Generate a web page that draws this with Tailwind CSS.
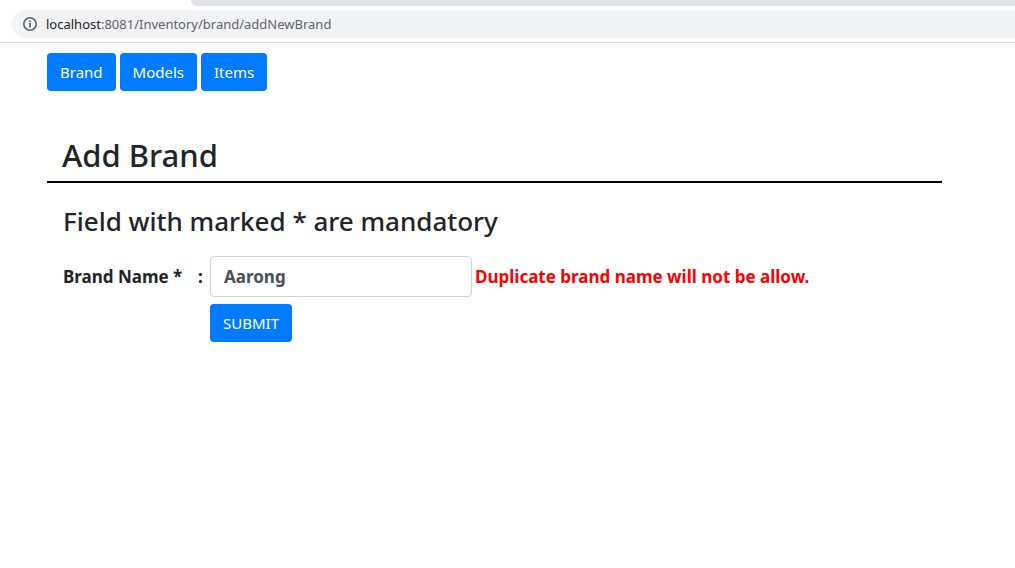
<!DOCTYPE html>
<html lang="en">
<head>
<meta charset="utf-8">
<meta name="viewport" content="width=device-width, initial-scale=1">
<title>Add Brand</title>
<script src="https://cdn.jsdelivr.net/npm/@tailwindcss/browser@4"></script>
</head>
<body class="bg-white font-['Noto_Sans',sans-serif] text-[#212529]">
  <header class="border-b border-[#dadada]">
    <div class="ml-[191px] h-[6px] rounded-bl-lg bg-[#dee1e6]"></div>
    <div class="py-1 pl-3">
      <div class="flex h-7 items-center gap-[9px] rounded-l-full bg-[#f1f3f4] pl-[11px]">
        <svg class="size-[14px] shrink-0" viewBox="0 0 14 14" fill="none" stroke="#5f6368" aria-hidden="true">
          <circle cx="7" cy="7" r="6.2" stroke-width="1.6"/>
          <path d="M7 6V10.5M7 3.4V5" stroke-width="1.8"/>
        </svg>
        <span class="text-[13px] leading-5 text-[#5f6368]"><span class="text-[#202124]">localhost</span>:8081/Inventory/brand/addNewBrand</span>
      </div>
    </div>
  </header>
  <main class="mr-[73px] ml-[47px] pt-[10px]">
    <nav class="flex gap-1">
      <button type="button" class="h-[38px] rounded bg-[#007bff] px-[13px] text-[15px] leading-6 text-white">Brand</button>
      <button type="button" class="h-[38px] rounded bg-[#007bff] px-[13px] text-[15px] leading-6 text-white">Models</button>
      <button type="button" class="h-[38px] rounded bg-[#007bff] px-[13px] text-[15px] leading-6 text-white">Items</button>
    </nav>
    <h1 class="mt-[46px] border-b-2 border-black px-[15px] pb-2 text-[31px] leading-9 font-medium">Add Brand</h1>
    <form class="px-4" onsubmit="return false">
      <h2 class="mt-5 text-[26px] leading-9 font-medium">Field with marked * are mandatory</h2>
      <div class="mt-[17px] grid grid-cols-[135px_12px_262px_1fr] items-center gap-y-[7px] text-[17px] leading-6 font-bold">
        <label for="brand-name">Brand Name *</label>
        <span>:</span>
        <input id="brand-name" type="text" value="Aarong" class="h-[41px] w-full rounded border border-[#ced4da] bg-white px-[13px] text-[#495057]">
        <span class="pl-[3px] text-[#ff0000]">Duplicate brand name will not be allow.</span>
        <button type="submit" class="col-start-3 h-[38px] justify-self-start rounded bg-[#007bff] px-[13px] text-[15px] font-normal text-white">SUBMIT</button>
      </div>
    </form>
  </main>
</body>
</html>
